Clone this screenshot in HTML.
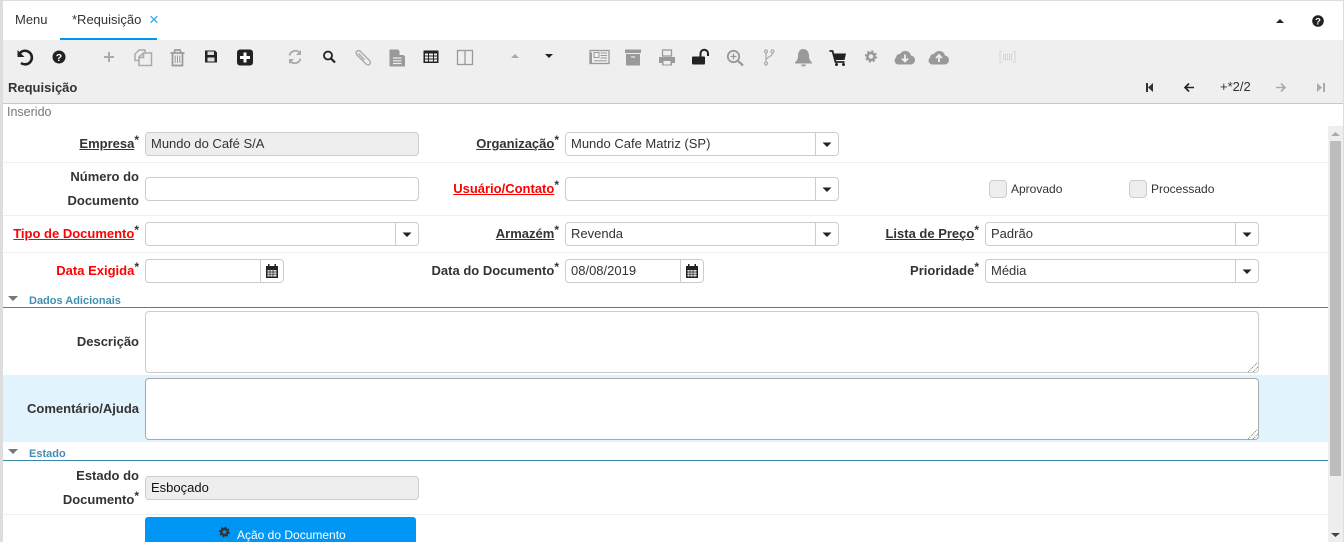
<!DOCTYPE html>
<html style="width:1344px;height:542px;overflow:hidden"><head><meta charset="utf-8">
<style>
html,body{margin:0;padding:0;background:#fff}
body{position:relative;width:1344px;height:542px;overflow:hidden;font-family:"Liberation Sans",sans-serif;font-size:13px;color:#333}
div,span.a{position:absolute;box-sizing:border-box}
.sep{left:3px;width:1325px;height:1px;background:#eee}
.t{white-space:nowrap;line-height:16px}
.l{white-space:nowrap;line-height:24px;font-weight:bold;text-align:right;color:#333}
.r{color:#f00}
.u{text-decoration:underline}
.st{font-size:12px;font-weight:bold;position:relative;top:-4px;line-height:0;margin-left:0;color:#333}
.f{background:#fff;border:1px solid #ccc;border-radius:4px;height:24px;line-height:21px;padding-left:5px;color:#333;white-space:nowrap}
.dis{background:#eee}
.dv{top:0;bottom:0;width:1px;background:#ccc}
.ta{background:#fff;border:1px solid #ccc;border-radius:4px}
.cb{width:18px;height:18px;background:#eee;border:1px solid #ccc;border-radius:4px}
.sec{font-size:11px;font-weight:bold;color:#3f8fb5;line-height:14px;white-space:nowrap}
</style></head>
<body>
<!-- frame -->
<div style="left:0;top:0;width:1344px;height:1px;background:#ddd"></div>
<div style="left:0;top:0;width:3px;height:542px;background:#ddd"></div>
<div style="left:1343px;top:0;width:1px;height:542px;background:#ddd"></div>
<div style="left:3px;top:40px;width:1340px;height:64px;background:#efefef;border-bottom:1px solid #c8c8c8"></div>
<div style="left:60px;top:38px;width:97px;height:2px;background:#0096f6"></div>
<div class="t" style="left:15px;top:12px">Menu</div>
<div class="t" style="left:72px;top:12px">*Requisição</div>
<div class="t" style="left:149px;top:12px;color:#2f9fe8;font-size:17px">×</div>
<div class="t" style="left:8px;top:80px;font-weight:bold">Requisição</div>
<div class="t" style="left:7px;top:104px;color:#777;font-size:12.5px">Inserido</div>
<div class="t" style="left:1220px;top:79px;color:#333">+*2/2</div>

<!-- rows -->
<div class="sep" style="top:162px"></div>
<div class="sep" style="top:215px"></div>
<div class="sep" style="top:252px"></div>
<div class="sep" style="top:514px"></div>
<div style="left:3px;top:375px;width:1325px;height:67px;background:#e1f3fd"></div>

<!-- col 1 -->
<div class="l" style="right:1205px;top:132px"><span class="u">Empresa</span><span class="st">*</span></div>
<div class="f dis" style="left:145px;top:132px;width:274px">Mundo do Café S/A</div>
<div class="l" style="right:1205px;top:165px;width:120px">Número do<br>Documento</div>
<div class="f" style="left:145px;top:177px;width:274px"></div>
<div class="l r" style="right:1205px;top:222px"><span class="u">Tipo de Documento</span><span class="st">*</span></div>
<div class="f" style="left:145px;top:222px;width:274px"><div class="dv" style="left:249px"></div></div>
<div class="l r" style="right:1205px;top:259px">Data Exigida<span class="st">*</span></div>
<div class="f" style="left:145px;top:259px;width:139px"><div class="dv" style="left:114px"></div></div>

<!-- col 2 -->
<div class="l" style="right:785px;top:132px"><span class="u">Organização</span><span class="st">*</span></div>
<div class="f" style="left:565px;top:132px;width:274px">Mundo Cafe Matriz (SP)<div class="dv" style="left:249px"></div></div>
<div class="l r" style="right:785px;top:177px"><span class="u">Usuário/Contato</span><span class="st">*</span></div>
<div class="f" style="left:565px;top:177px;width:274px"><div class="dv" style="left:249px"></div></div>
<div class="l" style="right:785px;top:222px"><span class="u">Armazém</span><span class="st">*</span></div>
<div class="f" style="left:565px;top:222px;width:274px">Revenda<div class="dv" style="left:249px"></div></div>
<div class="l" style="right:785px;top:259px">Data do Documento<span class="st">*</span></div>
<div class="f" style="left:565px;top:259px;width:139px">08/08/2019<div class="dv" style="left:114px"></div></div>

<!-- col 3 -->
<div class="cb" style="left:989px;top:180px"></div>
<div class="t" style="left:1011px;top:181px;font-size:12px">Aprovado</div>
<div class="cb" style="left:1129px;top:180px"></div>
<div class="t" style="left:1151px;top:181px;font-size:12px">Processado</div>
<div class="l" style="right:365px;top:222px"><span class="u">Lista de Preço</span><span class="st">*</span></div>
<div class="f" style="left:985px;top:222px;width:274px">Padrão<div class="dv" style="left:249px"></div></div>
<div class="l" style="right:365px;top:259px">Prioridade<span class="st">*</span></div>
<div class="f" style="left:985px;top:259px;width:274px">Média<div class="dv" style="left:249px"></div></div>

<!-- sections -->
<div class="sec" style="left:29px;top:294px">Dados Adicionais</div>
<div style="left:3px;top:307px;width:1325px;height:1px;background:#3a87ad"></div>
<div class="l" style="right:1205px;top:330px">Descrição</div>
<div class="ta" style="left:145px;top:311px;width:1114px;height:62px"></div>
<div class="l" style="right:1205px;top:397px">Comentário/Ajuda</div>
<div class="ta" style="left:145px;top:378px;width:1114px;height:62px;border-color:#a9a9a9"></div>
<div class="sec" style="left:29px;top:447px">Estado</div>
<div style="left:3px;top:460px;width:1325px;height:1px;background:#3a87ad"></div>
<div class="l" style="right:1205px;top:464px;width:120px">Estado do<br>Documento<span class="st">*</span></div>
<div class="f dis" style="left:145px;top:476px;width:274px;color:#111">Esboçado</div>
<div style="left:145px;top:517px;width:271px;height:25px;background:#0096f6;border-radius:3px 3px 0 0"></div>
<div class="t" style="left:237px;top:527px;color:#fff;font-size:12px">Ação do Documento</div>

<!-- scrollbar -->
<div style="left:1328px;top:126px;width:15px;height:416px;background:#eee"></div>
<div style="left:1330px;top:141px;width:11px;height:335px;background:#bdbdbd"></div>

<svg width="1344" height="542" viewBox="0 0 1344 542" style="position:absolute;left:0;top:0">
<defs>
<g id="cr"><path d="M-4.5,-2H4.5L0,2.5Z" fill="#222"/></g>
<g id="cal"><path d="M-6,-5H-4V-7H-2.5V-5H2.5V-7H4V-5H6V7H-6Z" fill="#222"/><path d="M-4.5,-1H4.5V5.5H-4.5Z" fill="#dfe3e8"/><path d="M-4.5,1H4.5M-4.5,3.2H4.5M-2,-1V5.5M1,-1V5.5" stroke="#222" stroke-width=".7"/></g>
<g id="grip"><path d="M-5,5L5,-5M0,5L5,0" stroke="#777" stroke-width="1" stroke-dasharray="1 1"/></g>
</defs>
<!-- field carets -->
<use href="#cr" x="827" y="144.5"/><use href="#cr" x="827" y="189.5"/><use href="#cr" x="827" y="234.5"/>
<use href="#cr" x="407" y="234.5"/>
<use href="#cr" x="1247" y="234.5"/><use href="#cr" x="1247" y="271.5"/>
<use href="#cal" x="272" y="271"/><use href="#cal" x="692" y="271"/>
<use href="#grip" x="1253" y="367"/><use href="#grip" x="1253" y="434"/>
<!-- section triangles -->
<path d="M8,296H18L13,301Z" fill="#777"/><path d="M8,449H18L13,454Z" fill="#777"/>
<!-- scrollbar arrows -->
<path d="M1331,136L1335.500,132L1340,136Z" fill="#aaa"/>
<path d="M1331,533H1340L1335.500,537Z" fill="#444"/>
<!-- top right -->
<path d="M1276,23L1280,19L1284,23Z" fill="#222"/>
<circle cx="1318" cy="21" r="5.800" fill="#222"/><text x="1318" y="24.500" font-family="Liberation Sans" font-size="9.500" font-weight="bold" fill="#fff" text-anchor="middle">?</text>
<!-- toolbar -->
<g fill="none" stroke="#222" stroke-width="2.600"><path d="M20,53A6.800,6.800 0 1 1 21,63"/></g>
<path d="M17.500,50V57H24.500Z" fill="#222"/>
<circle cx="59" cy="57" r="6.500" fill="#222"/><text x="59" y="61" font-family="Liberation Sans" font-size="10.500" font-weight="bold" fill="#fff" text-anchor="middle">?</text>
<path d="M109,52V62M104,57H114" stroke="#aaa" stroke-width="2"/>
<g fill="none" stroke="#aaa" stroke-width="1.500"><path d="M139,60.500H135V54L139,50H145V53"/><path d="M139,65.500V57L143.500,53H151.500V65.500Z"/><path d="M143.500,53V57.500H139"/></g>
<g fill="none" stroke="#999" stroke-width="1.700"><path d="M170.500,53H184.500"/><path d="M174,53L175,50H180L181,53"/><path d="M172.500,53V65.500H182.500V53"/></g><path d="M175.200,55.500V63M177.500,55.500V63M179.800,55.500V63" stroke="#999" stroke-width="1"/>
<path d="M205,50.500H215L217,52.500V62.500H205Z" fill="#222"/><rect x="207.500" y="51.500" width="6.500" height="3.500" fill="#ddd"/><rect x="207.500" y="57.500" width="7" height="4" fill="#ddd"/>
<rect x="237" y="49.500" width="16" height="16" rx="3" fill="#222"/><path d="M245,52.500V62.500M240,57.500H250" stroke="#fff" stroke-width="3"/>
<g fill="none" stroke="#aaa" stroke-width="1.800"><path d="M289.500,55.500A6,6 0 0 1 300,53"/><path d="M300.500,58.500A6,6 0 0 1 290,61"/></g><path d="M301,50V55H296ZM289,64V59H294Z" fill="#aaa"/>
<circle cx="328" cy="55.500" r="4" fill="none" stroke="#222" stroke-width="1.800"/><path d="M331,58.500L335,62.500" stroke="#222" stroke-width="2.200"/>
<path d="M369.500,60.500L360.500,51.500C358,49 354.500,52 357,55L366,64C369,66.500 372,63 369.500,60.500ZM364.500,60L358.500,53.500" fill="none" stroke="#aaa" stroke-width="1.400"/>
<path d="M389.500,49.500H398L405,56.500V66.500H389.500Z" fill="#999"/><path d="M399.500,49.500L405,55H399.500Z" fill="#efefef"/><path d="M393,58H401.500M393,60.800H401.500M393,63.500H401.500" stroke="#efefef" stroke-width="1.200"/>
<rect x="423.500" y="50.500" width="15" height="12.500" fill="#222"/><path d="M425,53.500H428V55.500H425ZM429,53.500H433V55.500H429ZM434,53.500H437V55.500H434ZM425,56.500H428V58.500H425ZM429,56.500H433V58.500H429ZM434,56.500H437V58.500H434ZM425,59.500H428V61.500H425ZM429,59.500H433V61.500H429ZM434,59.500H437V61.500H434Z" fill="#efefef"/>
<rect x="457.500" y="50.500" width="15" height="14" fill="none" stroke="#999" stroke-width="1.300"/><path d="M465,50.500V64.500" stroke="#999" stroke-width="1.300"/>
<path d="M511,58L515,54L519,58Z" fill="#aaa"/>
<path d="M545,54H553L549,58Z" fill="#222"/>
<!-- newspaper -->
<rect x="590" y="50.500" width="19" height="13" fill="none" stroke="#999" stroke-width="1.300"/><path d="M590,52.500H592V63H590Z" fill="#999"/><rect x="594" y="52.500" width="5" height="5" fill="none" stroke="#999"/><path d="M600.500,53H607M600.500,55.500H607M600.500,58H607M594,60.800H607" stroke="#999"/>
<!-- archive -->
<path d="M625,49.500H641V53H625ZM626,54H640V65.500H626Z" fill="#999"/><path d="M631,57H635" stroke="#efefef" stroke-width="1.200"/>
<!-- print -->
<path d="M659,57H675V63H672V65.500H662V63H659Z" fill="#999"/><rect x="662.500" y="50" width="9" height="6" fill="none" stroke="#999" stroke-width="1.300"/><rect x="663.500" y="61" width="7" height="3.500" fill="#efefef"/>
<!-- unlock -->
<rect x="692" y="56.500" width="13" height="8" rx="1" fill="#222"/><path d="M700.500,56.500V53.500A3.700,3.700 0 0 1 708,53.500V56" fill="none" stroke="#222" stroke-width="2"/>
<!-- search plus -->
<circle cx="733.500" cy="56.500" r="5.700" fill="none" stroke="#999" stroke-width="1.800"/><path d="M737.500,60.500L743,65.500" stroke="#999" stroke-width="2.200"/><path d="M733.500,53.500V59.500M730.500,56.500H736.500" stroke="#999" stroke-width="1.200"/>
<!-- fork -->
<g fill="none" stroke="#aaa" stroke-width="1.200"><circle cx="766" cy="51.500" r="1.500"/><circle cx="772.500" cy="51.500" r="1.500"/><circle cx="766" cy="63.500" r="1.500"/><path d="M766,53V62M772.500,53C772.500,57 766,57 766,60"/></g>
<!-- bell -->
<path d="M803,49C807,49 809,52 809,56C809,59.500 810.500,61 812,62.500V63.500H795V62.500C796.500,61 798,59.500 798,56C798,52 800,49 803,49Z" fill="#999"/><path d="M801,64.500H806A2.500,2 0 0 1 801,64.500Z" fill="#999"/>
<!-- cart -->
<path d="M833,53.500H846L844.500,60H835Z" fill="#222"/><path d="M829.500,51H832.500L835.500,62H844.500" stroke="#222" stroke-width="1.800" fill="none"/><circle cx="836.500" cy="64.500" r="1.500" fill="#222"/><circle cx="843.500" cy="64.500" r="1.500" fill="#222"/>
<!-- cog -->
<circle cx="871" cy="56.500" r="3.500" fill="none" stroke="#999" stroke-width="2.600"/><circle cx="871" cy="56.500" r="5.200" fill="none" stroke="#999" stroke-width="1.800" stroke-dasharray="2.100 2"/>
<!-- cloud down/up -->
<path d="M899,64.500A4,4 0 0 1 896,57.500A3.500,3.500 0 0 1 900,54A6,6 0 0 1 911,55.500A4.500,4.500 0 0 1 910,64.500Z" fill="#999"/><path d="M905,54.500V61M902,58.500L905,61.500L908,58.500" fill="none" stroke="#efefef" stroke-width="1.800"/>
<path d="M933,64.500A4,4 0 0 1 930,57.500A3.500,3.500 0 0 1 934,54A6,6 0 0 1 945,55.500A4.500,4.500 0 0 1 944,64.500Z" fill="#999"/><path d="M939,62V55.500M936,58L939,55L942,58" fill="none" stroke="#efefef" stroke-width="1.800"/>
<!-- barcode -->
<path d="M1002,51.500H1000V62.500H1002M1013,51.500H1015V62.500H1013" fill="none" stroke="#d5d5d5"/><path d="M1003.500,53.500V60.500M1005.500,53.500V60.500M1007.500,53.500V60.500M1009.500,53.500V60.500M1011.500,53.500V60.500" stroke="#d5d5d5" stroke-width="1.100"/>
<!-- nav -->
<path d="M1146,83H1148V92H1146ZM1153,83V92L1148,87.500Z" fill="#333"/>
<path d="M1194,87.500H1185M1189,83.500L1185,87.500L1189,91.500" fill="none" stroke="#222" stroke-width="1.600"/>
<path d="M1276,87.500H1285M1281,83.500L1285,87.500L1281,91.500" fill="none" stroke="#aaa" stroke-width="1.600"/>
<path d="M1323,83H1325V92H1323ZM1317,83V92L1322,87.500Z" fill="#aaa"/>
<!-- button cog -->
<circle cx="224.500" cy="532" r="3" fill="none" stroke="#333" stroke-width="2.400"/><circle cx="224.500" cy="532" r="4.600" fill="none" stroke="#333" stroke-width="1.600" stroke-dasharray="1.800 1.800"/>
</svg>
</body></html>
